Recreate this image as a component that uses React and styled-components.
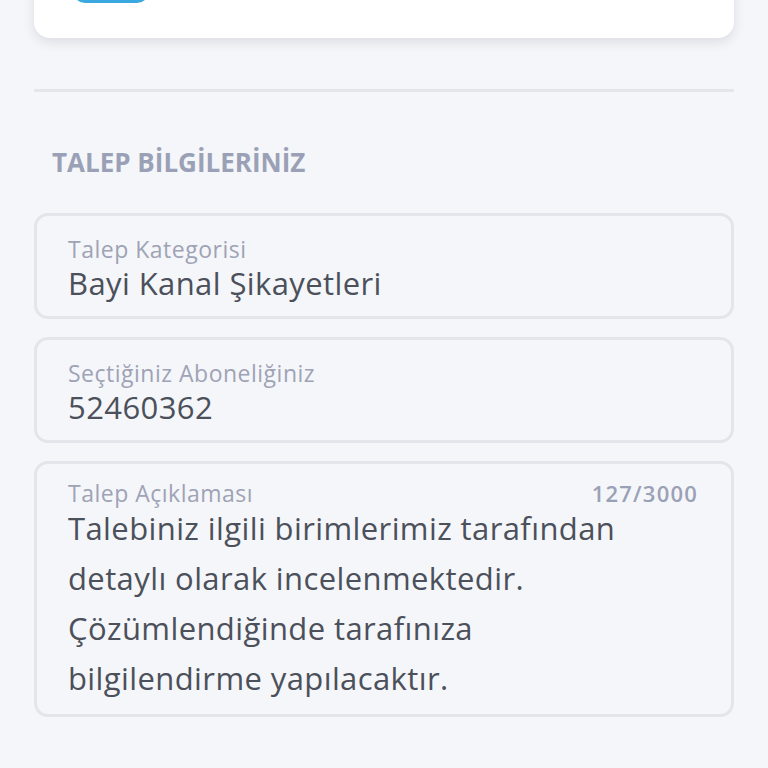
import styled, { createGlobalStyle } from "styled-components";

const GlobalStyle = createGlobalStyle`
    html, body {
        margin: 0;
        padding: 0;
        background-color: #f5f6f9;
        font-family: "Open Sans", "Noto Sans", sans-serif;
        overflow: hidden;
    }
`;

const Page = styled.div`
    width: 768px;
    height: 768px;
    box-sizing: border-box;
    padding: 0 34px;
    display: flex;
    flex-direction: column;
    overflow: hidden;
`;

const TopCard = styled.div`
    margin-top: -102px;
    height: 140px;
    box-sizing: border-box;
    background-color: #ffffff;
    border-radius: 16px;
    box-shadow: 0 4px 12px rgba(30, 40, 70, 0.12);
    display: flex;
    align-items: flex-end;
    padding: 0 0 35px 39px;
`;

const BlueButton = styled.div`
    width: 76px;
    height: 40px;
    border-radius: 12px;
    background-color: #3aa9e1;
`;

const Divider = styled.hr`
    margin: 51px 0 0 0;
    border: none;
    height: 3px;
    border-radius: 2px;
    background-color: #e3e5ea;
`;

const SectionTitle = styled.h2`
    margin: 54px 0 0 18px;
    font-size: 26px;
    font-weight: 700;
    color: #9aa1b6;
    line-height: 32px;
`;

const Fields = styled.div`
    margin-top: 35px;
    display: flex;
    flex-direction: column;
    gap: 18px;
`;

const Field = styled.div`
    border: 3px solid #e3e5ea;
    border-radius: 14px;
    padding: ${props => props.padding || "19px 31px 13px"};
    display: flex;
    flex-direction: column;
`;

const LabelRow = styled.div`
    display: flex;
    justify-content: space-between;
    align-items: center;
    height: 20px;
`;

const Label = styled.span`
    font-size: 23px;
    line-height: ${props => props.lineHeight || "28px"};
    letter-spacing: 0.5px;
    color: #9ea3b6;
    font-weight: 400;
`;

const Counter = styled.span`
    font-size: 22px;
    line-height: 20px;
    font-weight: 600;
    letter-spacing: 1.2px;
    color: #9aa1b6;
    margin-right: 2px;
`;

const Value = styled.div`
    font-size: 31px;
    letter-spacing: 0.4px;
    line-height: ${props => props.lineHeight || "40px"};
    color: #4b505b;
    font-weight: 400;
    white-space: nowrap;
`;

const App = () => {
    return (
        <>
            <GlobalStyle />
            <Page>
                <TopCard>
                    <BlueButton />
                </TopCard>
                <Divider />
                <SectionTitle>TALEP BİLGİLERİNİZ</SectionTitle>
                <Fields>
                    <Field>
                        <Label>Talep Kategorisi</Label>
                        <Value>Bayi Kanal Şikayetleri</Value>
                    </Field>
                    <Field>
                        <Label>Seçtiğiniz Aboneliğiniz</Label>
                        <Value>52460362</Value>
                    </Field>
                    <Field padding="19px 31px 11px">
                        <LabelRow>
                            <Label lineHeight="20px">Talep Açıklaması</Label>
                            <Counter>127/3000</Counter>
                        </LabelRow>
                        <Value lineHeight="50px">
                            Talebiniz ilgili birimlerimiz tarafından<br />
                            detaylı olarak incelenmektedir.<br />
                            Çözümlendiğinde tarafınıza<br />
                            bilgilendirme yapılacaktır.
                        </Value>
                    </Field>
                </Fields>
            </Page>
        </>
    );
};

export default App;
